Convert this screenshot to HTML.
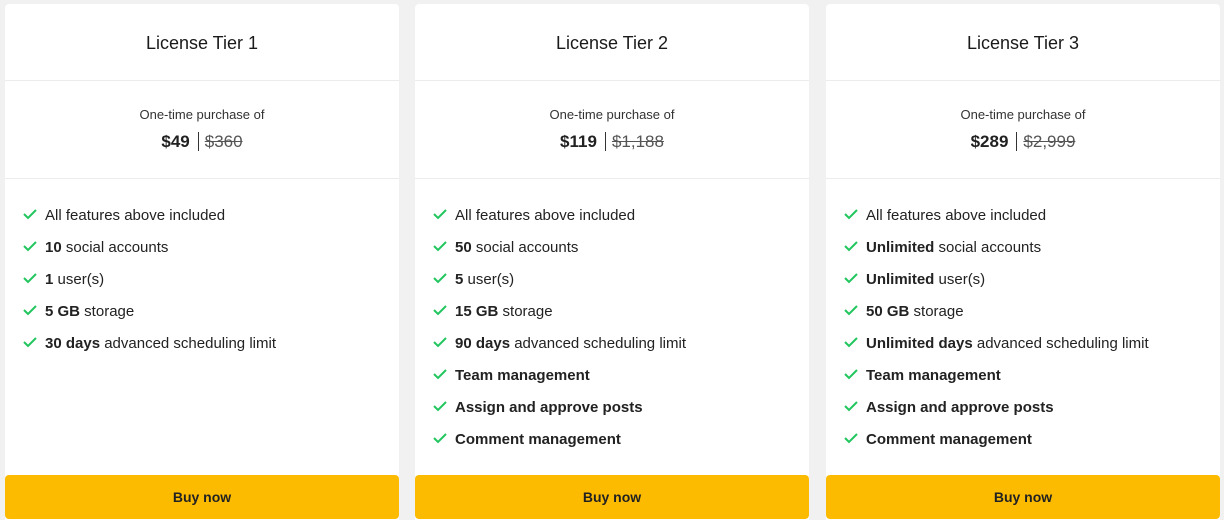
<!DOCTYPE html>
<html><head><style>
body{margin:0;width:1224px;height:520px;background:#f1f1f1;font-family:"Liberation Sans",Arial,sans-serif;color:#212121;overflow:hidden;position:relative}
.card{position:absolute;top:4px;width:394px;height:516px;background:#fff;border-radius:4px 4px 0 0}
.h{height:76px;border-bottom:1px solid #ececec;text-align:center;line-height:78px;font-size:18px;font-weight:500;color:#1a1a1a}
.p{height:97px;border-bottom:1px solid #ececec;text-align:center}
.p .s{font-size:13px;color:#333;padding-top:26px;line-height:16px}
.p .v{margin-top:8px;font-size:17px;line-height:22px}
.p b{font-weight:bold;padding-right:8px;border-right:1px solid #333}
.p del{color:#555;padding-left:6px}
ul{list-style:none;margin:0;padding:23px 0 0 18px}
li{height:32px;font-size:15px;line-height:28px;color:#222}
li svg{vertical-align:0px;margin-right:8px}
.btn{position:absolute;left:0;right:0;top:471px;height:44px;background:#fdbb00;border-radius:4px;text-align:center;line-height:44px;font-size:14px;font-weight:bold;color:#222}
</style></head><body>
<div class="card" style="left:5px">
<div class="h">License Tier 1</div>
<div class="p"><div class="s">One-time purchase of</div><div class="v"><b>$49</b><del>$360</del></div></div>
<ul>
<li><svg width="14" height="12"><path d="M1 6l4 4 8-8" stroke="#22c55e" stroke-width="2" fill="none"/></svg>All features above included</li>
<li><svg width="14" height="12"><path d="M1 6l4 4 8-8" stroke="#22c55e" stroke-width="2" fill="none"/></svg><b>10</b> social accounts</li>
<li><svg width="14" height="12"><path d="M1 6l4 4 8-8" stroke="#22c55e" stroke-width="2" fill="none"/></svg><b>1</b> user(s)</li>
<li><svg width="14" height="12"><path d="M1 6l4 4 8-8" stroke="#22c55e" stroke-width="2" fill="none"/></svg><b>5 GB</b> storage</li>
<li><svg width="14" height="12"><path d="M1 6l4 4 8-8" stroke="#22c55e" stroke-width="2" fill="none"/></svg><b>30 days</b> advanced scheduling limit</li>
</ul>
<div class="btn">Buy now</div>
</div>
<div class="card" style="left:415px">
<div class="h">License Tier 2</div>
<div class="p"><div class="s">One-time purchase of</div><div class="v"><b>$119</b><del>$1,188</del></div></div>
<ul>
<li><svg width="14" height="12"><path d="M1 6l4 4 8-8" stroke="#22c55e" stroke-width="2" fill="none"/></svg>All features above included</li>
<li><svg width="14" height="12"><path d="M1 6l4 4 8-8" stroke="#22c55e" stroke-width="2" fill="none"/></svg><b>50</b> social accounts</li>
<li><svg width="14" height="12"><path d="M1 6l4 4 8-8" stroke="#22c55e" stroke-width="2" fill="none"/></svg><b>5</b> user(s)</li>
<li><svg width="14" height="12"><path d="M1 6l4 4 8-8" stroke="#22c55e" stroke-width="2" fill="none"/></svg><b>15 GB</b> storage</li>
<li><svg width="14" height="12"><path d="M1 6l4 4 8-8" stroke="#22c55e" stroke-width="2" fill="none"/></svg><b>90 days</b> advanced scheduling limit</li>
<li><svg width="14" height="12"><path d="M1 6l4 4 8-8" stroke="#22c55e" stroke-width="2" fill="none"/></svg><b>Team management</b></li>
<li><svg width="14" height="12"><path d="M1 6l4 4 8-8" stroke="#22c55e" stroke-width="2" fill="none"/></svg><b>Assign and approve posts</b></li>
<li><svg width="14" height="12"><path d="M1 6l4 4 8-8" stroke="#22c55e" stroke-width="2" fill="none"/></svg><b>Comment management</b></li>
</ul>
<div class="btn">Buy now</div>
</div>
<div class="card" style="left:826px">
<div class="h">License Tier 3</div>
<div class="p"><div class="s">One-time purchase of</div><div class="v"><b>$289</b><del>$2,999</del></div></div>
<ul>
<li><svg width="14" height="12"><path d="M1 6l4 4 8-8" stroke="#22c55e" stroke-width="2" fill="none"/></svg>All features above included</li>
<li><svg width="14" height="12"><path d="M1 6l4 4 8-8" stroke="#22c55e" stroke-width="2" fill="none"/></svg><b>Unlimited</b> social accounts</li>
<li><svg width="14" height="12"><path d="M1 6l4 4 8-8" stroke="#22c55e" stroke-width="2" fill="none"/></svg><b>Unlimited</b> user(s)</li>
<li><svg width="14" height="12"><path d="M1 6l4 4 8-8" stroke="#22c55e" stroke-width="2" fill="none"/></svg><b>50 GB</b> storage</li>
<li><svg width="14" height="12"><path d="M1 6l4 4 8-8" stroke="#22c55e" stroke-width="2" fill="none"/></svg><b>Unlimited days</b> advanced scheduling limit</li>
<li><svg width="14" height="12"><path d="M1 6l4 4 8-8" stroke="#22c55e" stroke-width="2" fill="none"/></svg><b>Team management</b></li>
<li><svg width="14" height="12"><path d="M1 6l4 4 8-8" stroke="#22c55e" stroke-width="2" fill="none"/></svg><b>Assign and approve posts</b></li>
<li><svg width="14" height="12"><path d="M1 6l4 4 8-8" stroke="#22c55e" stroke-width="2" fill="none"/></svg><b>Comment management</b></li>
</ul>
<div class="btn">Buy now</div>
</div>
</body></html>
